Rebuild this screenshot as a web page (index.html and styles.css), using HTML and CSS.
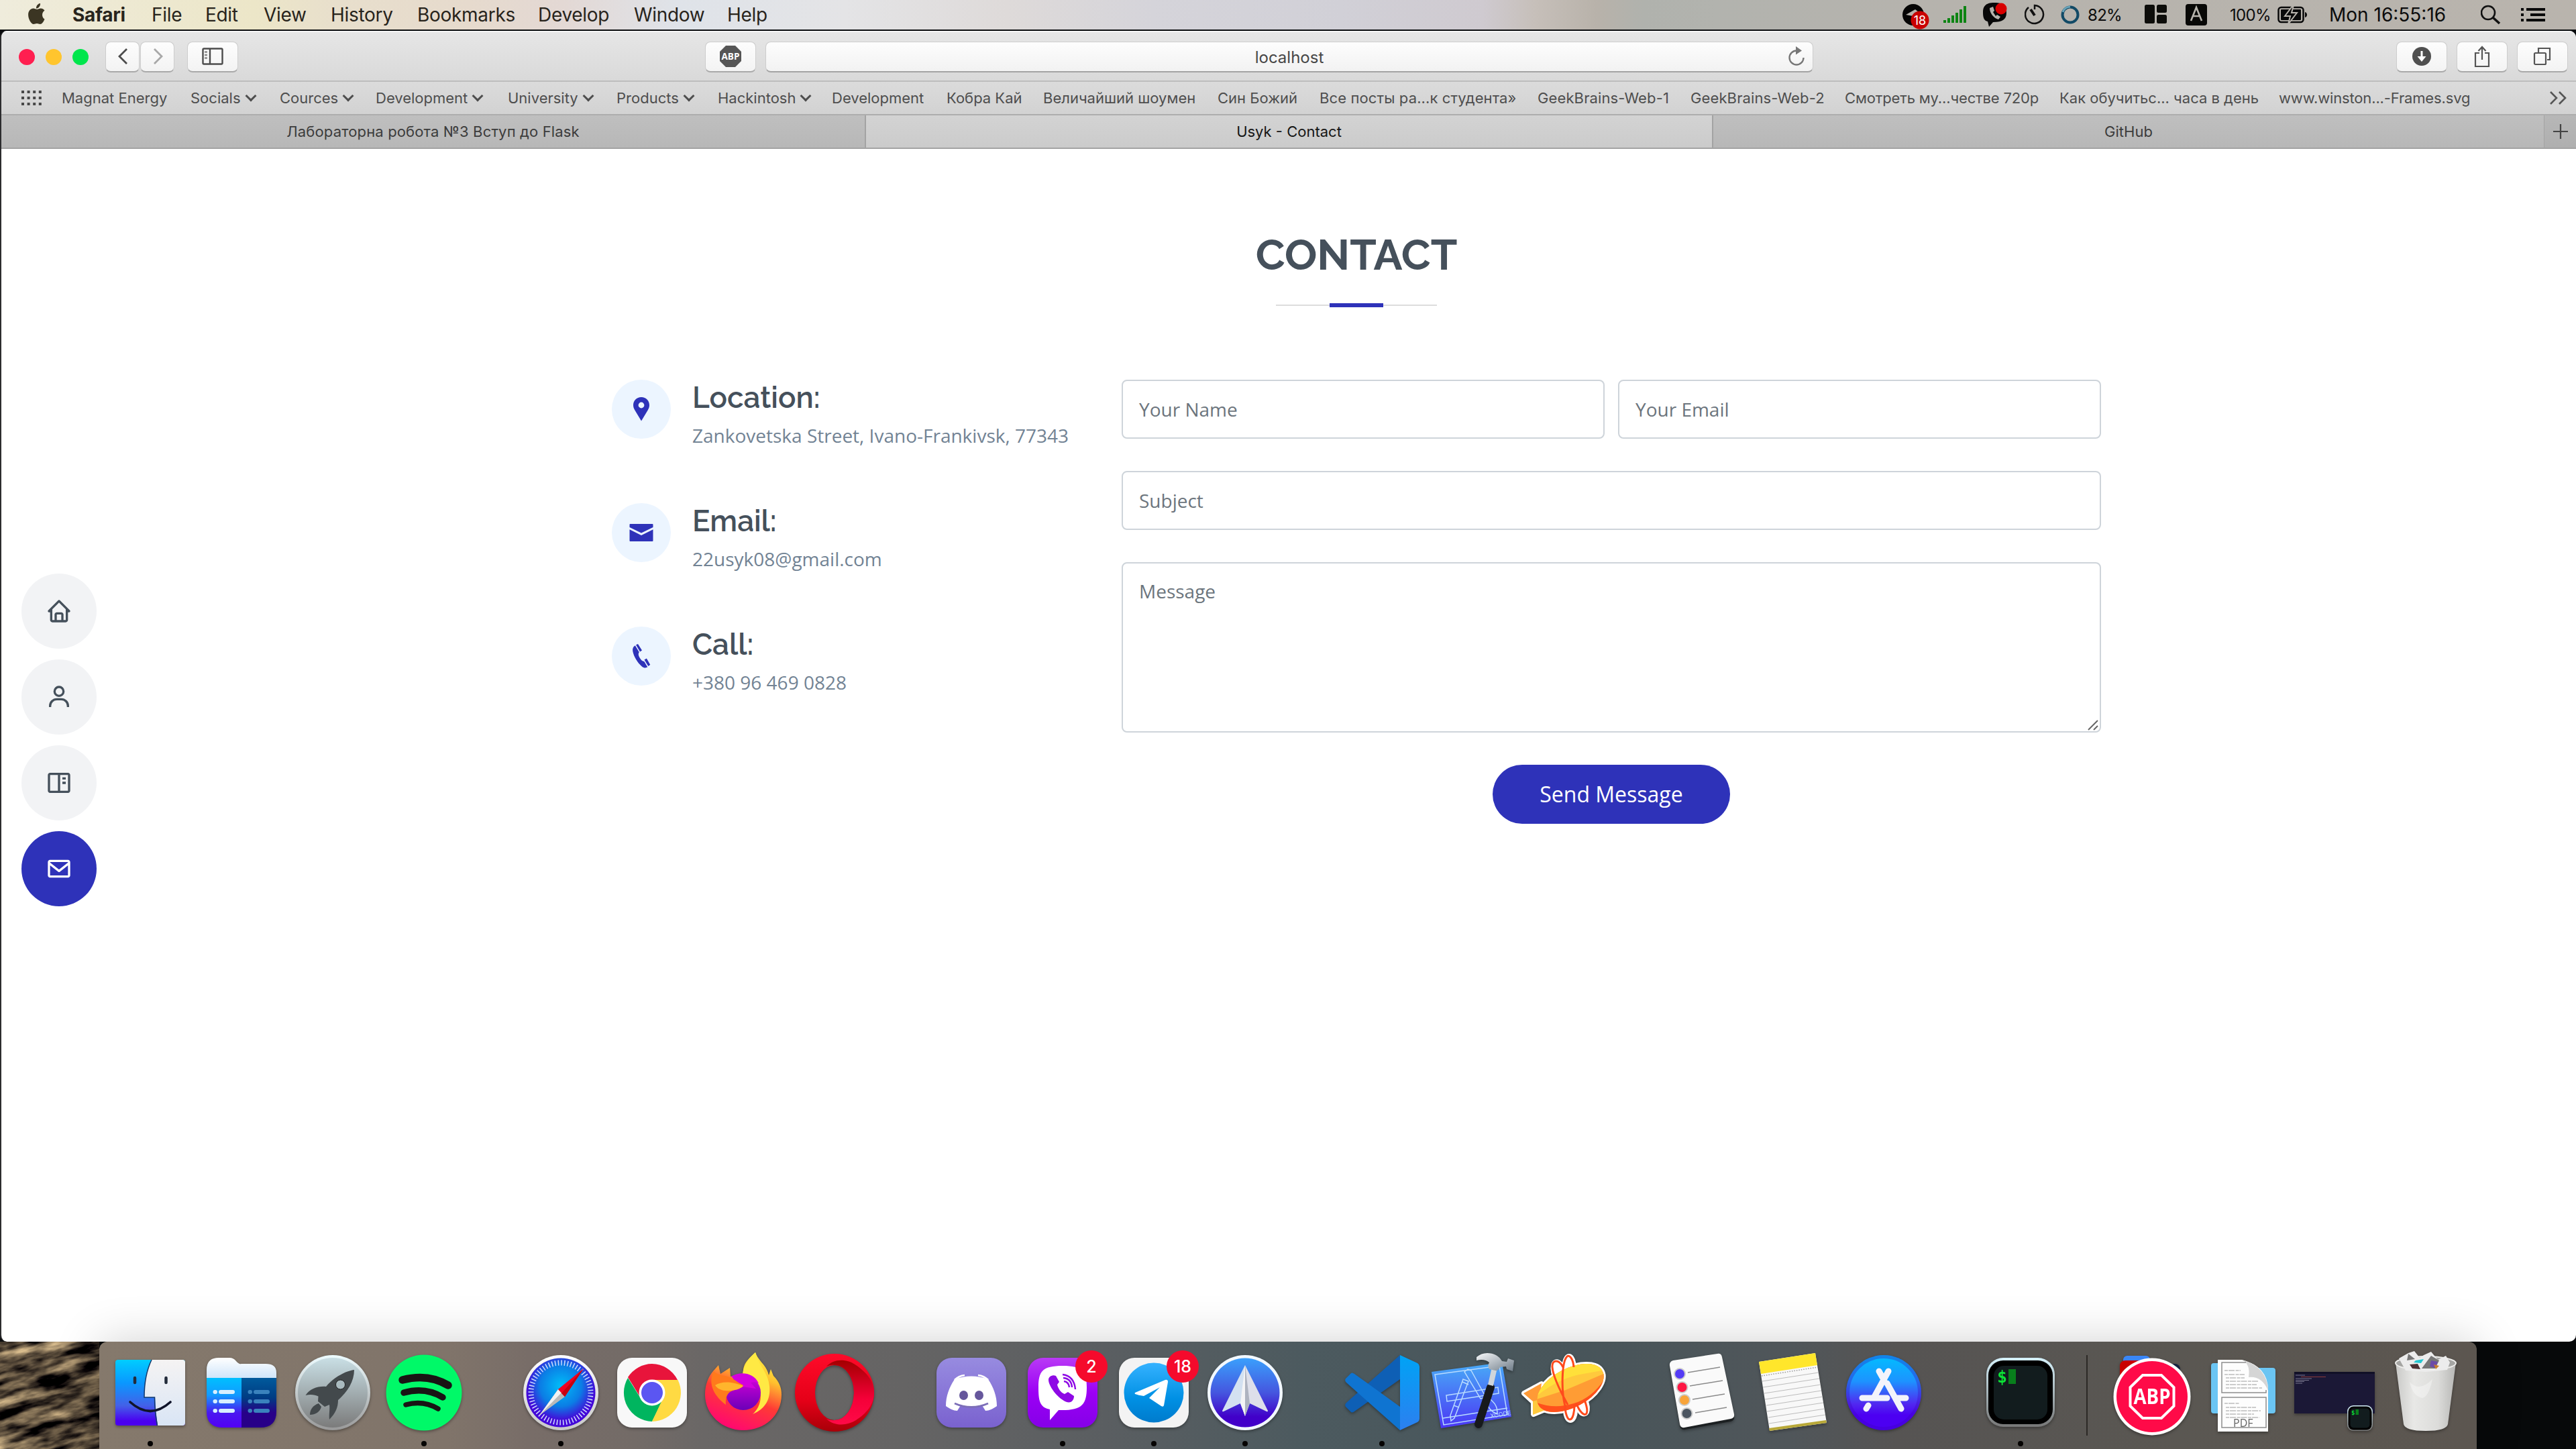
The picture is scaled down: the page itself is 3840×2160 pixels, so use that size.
FILE: index.html
```html
<!DOCTYPE html>
<html lang="en">
<head>
<meta charset="utf-8">
<title>Usyk - Contact</title>
<link rel="stylesheet" href="styles.css">
</head>
<body>
<div class="desktop">
  <header class="menubar">
    <svg class="apple" width="108" height="44" viewBox="0 0 108 44"><path d="M60 5c.6 3.600-2.600 7.600-6 7.600C53.600 9 56.600 5.400 60 5zM66.500 28.500c-1.700 4.300-4 7.500-6.600 7.500-1.700 0-2.900-1-4.900-1s-3.300 1-4.900 1c-3.600 0-8-7.400-8-14 0-5.800 3.700-9.400 7.600-9.400 2 0 3.700 1.300 5.300 1.300s3.400-1.400 5.800-1.400c2 0 4.300 1 5.700 3.200-5 3-4.200 10.600 0 12.800z" fill="#3b3523"/></svg>
    <nav class="menus">
      <b>Safari</b><span>File</span><span>Edit</span><span>View</span><span>History</span><span>Bookmarks</span><span>Develop</span><span>Window</span><span>Help</span>
    </nav>
    <div class="status">
      <svg width="44" height="44" viewBox="0 0 44 44"><circle cx="16" cy="22" r="16" fill="#050505"/><path d="M5 22l14-8 5 4-6 1-2 5z" fill="#b4b1ab"/><circle cx="26" cy="30" r="13.500" fill="#c90000"/><text x="26" y="36.500" class="tiny">18</text></svg>
      <svg width="44" height="44" viewBox="0 0 44 44" fill="#0d8413"><path d="M0 30h4v4H0zM6 27h4v7H6zM12 23h4v11h-4zM18 19h4v15h-4zM24 14h4v20h-4zM30 9h4v25h-4z"/></svg>
      <svg width="44" height="44" viewBox="0 0 44 44"><path d="M17 4C3 4 0 10 0 19c0 8 2 12 7 13l2 8 6-7c14 0 20-4 20-14S31 4 17 4z" fill="#080808"/><path d="M10 12c0 8 6 15 13 17l3-4-5-3-2 2-4-6 2-2-2-6z" fill="#b4b1ab"/><circle cx="27" cy="13" r="8.500" fill="#d80000"/></svg>
      <svg width="44" height="44" viewBox="0 0 44 44" fill="none" stroke="#111" stroke-width="2.500"><path d="M6 11A13.500 13.500 0 1 0 15 8v6"/><path d="M9 14l6 9" stroke-width="4"/></svg>
      <svg width="40" height="44" viewBox="0 0 40 44" fill="none"><circle cx="14" cy="22" r="11.500" stroke="#124a66" stroke-width="4"/><path d="M3 18A12 12 0 0 1 14 10" stroke="#69a3b8" stroke-width="3"/></svg>
      <span class="small">82%</span>
      <svg width="44" height="44" viewBox="0 0 44 44" fill="#0d0d0a"><rect y="7" width="15" height="28" rx="2.500"/><rect x="18" y="7" width="15" height="12" rx="2.500"/><rect x="18" y="22" width="15" height="13" rx="2.500"/></svg>
      <svg width="44" height="44" viewBox="0 0 44 44"><rect y="6" width="32" height="32" rx="4" fill="#080806"/><path d="M8 31l8-20 8 20M11 24h10" fill="none" stroke="#b6b3ac" stroke-width="2.600"/></svg>
      <span class="small">100%</span>
      <svg width="60" height="44" viewBox="0 0 60 44"><rect x="1.500" y="11" width="37" height="22" rx="4" fill="none" stroke="#0a0a0a" stroke-width="2.500"/><rect x="5" y="14" width="30" height="16" rx="1" fill="#0a0a0a"/><path d="M23 8L11 24h8l-3 12 13-17h-8l3-11z" fill="#0a0a0a" stroke="#b8b4ad" stroke-width="2"/><path d="M41 18v8c4-1 4-7 0-8z" fill="#0a0a0a"/></svg>
      <span>Mon 16:55:16</span>
      <svg width="44" height="44" viewBox="0 0 44 44" fill="none" stroke="#111" stroke-width="2.600"><circle cx="11" cy="19" r="10"/><path d="M18 26l10 9" stroke-width="3.600"/></svg>
      <svg width="44" height="44" viewBox="0 0 44 44" fill="#0a0a0a"><path d="M0 12h4v4H0zM8 12h28v4H8zM0 20h4v4H0zM14 20h22v4H14zM0 28h4v4H0zM8 28h28v4H8z"/></svg>
    </div>
  </header>

  <section class="window">
    <div class="toolbar">
      <div class="lights"><i class="red"></i><i class="yellow"></i><i class="green"></i></div>
      <div class="btn arrow"><svg width="48" height="44" viewBox="0 0 48 44"><path d="M30 11L19 22l11 11" fill="none" stroke="#4c4c4c" stroke-width="2.800"/></svg></div>
      <div class="btn arrow"><svg width="48" height="44" viewBox="0 0 48 44"><path d="M19 11l11 11-11 11" fill="none" stroke="#a8a8a8" stroke-width="2.800"/></svg></div>
      <div class="btn side"><svg width="32" height="26" viewBox="0 0 32 26" fill="none" stroke="#4c4c4c" stroke-width="2.400"><rect x="1.500" y="1.500" width="29" height="23" rx="1.500"/><path d="M12 2v22"/><path d="M4 6.500h4M4 11h4M4 15.500h4" stroke="#8a8a8a"/></svg></div>
      <div class="btn abp"><svg width="34" height="34" viewBox="0 0 34 34"><path d="M10 1h14l9 9v14l-9 9H10l-9-9V10z" fill="#555"/><text x="17" y="22" class="abp-sm" textLength="27" lengthAdjust="spacingAndGlyphs">ABP</text></svg></div>
      <div class="address"><span>localhost</span>
        <svg width="28" height="32" viewBox="0 0 28 32"><path d="M14 7.500A10.500 10.500 0 1 0 24.500 18" fill="none" stroke="#777" stroke-width="2.400"/><path d="M13 1l9 6.500-9 6z" fill="#777"/></svg></div>
      <div class="right-tools">
        <div class="btn"><svg width="30" height="30" viewBox="0 0 30 30"><circle cx="15" cy="15" r="14" fill="#4f4f4f"/><path d="M13.500 7h3v8h5L15 23l-6.500-8h5z" fill="#fff"/></svg></div>
        <div class="btn"><svg width="28" height="34" viewBox="0 0 28 34" fill="none" stroke="#555" stroke-width="2.200"><path d="M10 12H4v20h20V12h-6M14 22V3M8.500 9L14 3l5.500 6"/></svg></div>
        <div class="btn"><svg width="28" height="28" viewBox="0 0 28 28" fill="none" stroke="#555" stroke-width="2.200"><rect x="2" y="9" width="17" height="17" rx="1.500"/><path d="M8 8V2h17v17h-4"/></svg></div>
      </div>
    </div>
    <div class="bookmarks">
      <svg width="32" height="22" viewBox="0 0 32 22"><path d="M2 2h30M2 11h30M2 20h30" stroke="#484848" stroke-width="4" stroke-dasharray="4 4.600"/></svg>
      <span>Magnat Energy</span>
      <span class="more">Socials</span><span class="more">Cources</span><span class="more">Development</span><span class="more">University</span><span class="more">Products</span><span class="more">Hackintosh</span>
      <span>Development</span><span>Кобра Кай</span><span>Величайший шоумен</span><span>Син Божий</span><span class="loose">Все посты ра...к студента»</span><span class="loose">GeekBrains-Web-1</span><span class="loose">GeekBrains-Web-2</span><span class="tight">Смотреть му...честве 720p</span><span>Как обучитьс... часа в день</span><span class="tight">www.winston...-Frames.svg</span>
      <svg width="28" height="22" viewBox="0 0 28 22"><path d="M2 2l9 9-9 9M15 2l9 9-9 9" fill="none" stroke="#555" stroke-width="2.600"/></svg>
    </div>
    <div class="tabs">
      <div class="tab first">Лабораторна робота №3 Вступ до Flask</div>
      <div class="tab active">Usyk - Contact</div>
      <div class="tab">GitHub</div>
      <div class="tab plus"><svg width="24" height="24" viewBox="0 0 24 24"><path d="M12 1v22M1 12h22" stroke="#444" stroke-width="2.200"/></svg></div>
    </div>

    <div class="page">
      <aside class="sidenav">
        <a><svg viewBox="0 0 24 24"><path d="M3 13h1v7c0 1.103.897 2 2 2h12c1.103 0 2-.897 2-2v-7h1a1 1 0 0 0 .707-1.707l-9-9a.999.999 0 0 0-1.414 0l-9 9A1 1 0 0 0 3 13zm7 7v-5h4v5h-4zm2-15.586 6 6V15l.001 5H16v-5c0-1.103-.897-2-2-2h-4c-1.103 0-2 .897-2 2v5H6v-9.586l6-6z"/></svg></a>
        <a><svg viewBox="0 0 24 24"><path d="M12 2a5 5 0 1 0 5 5 5 5 0 0 0-5-5zm0 8a3 3 0 1 1 3-3 3 3 0 0 1-3 3zm9 11v-1a7 7 0 0 0-7-7h-4a7 7 0 0 0-7 7v1h2v-1a5 5 0 0 1 5-5h4a5 5 0 0 1 5 5v1z"/></svg></a>
        <a><svg viewBox="0 0 24 24"><path d="M20 3H4c-1.103 0-2 .897-2 2v14c0 1.103.897 2 2 2h16c1.103 0 2-.897 2-2V5c0-1.103-.897-2-2-2zM4 19V5h7v14H4zm9 0V5h7.001L20.002 19H13z"/><path d="M15 7h3v2h-3zm0 4h3v2h-3z"/></svg></a>
        <a class="current"><svg viewBox="0 0 24 24"><path d="M20 4H4c-1.103 0-2 .897-2 2v12c0 1.103.897 2 2 2h16c1.103 0 2-.897 2-2V6c0-1.103-.897-2-2-2zm0 2v.511l-8 6.223-8-6.222V6h16zM4 18V9.044l7.386 5.745a.994.994 0 0 0 1.228 0L20 9.044 20.002 18H4z"/></svg></a>
      </aside>
      <main class="contact">
        <h2>CONTACT</h2>
        <div class="rule"><i></i></div>
        <div class="columns">
          <div class="info">
            <div class="entry">
              <svg viewBox="0 0 88 88"><path d="M44 26c-7 0-12 5-12 12 0 3 1 5 2.200 7.200L44 61.500l9.800-16.300C55 43 56 41 56 38c0-7-5-12-12-12zm0 7.600a4.400 4.400 0 1 1 0 8.800 4.400 4.400 0 0 1 0-8.800z" fill-rule="evenodd"/></svg>
              <div><h4>Location:</h4><p>Zankovetska Street, Ivano-Frankivsk, 77343</p></div>
            </div>
            <div class="entry">
              <svg viewBox="0 0 88 88"><path d="M27.500 31h33q1 0 1 1v4L44 44.500 26.500 36v-4q0-1 1-1zM26.500 39.200L44 48l17.500-8.800V56q0 1-1 1h-33q-1 0-1-1z"/></svg>
              <div><h4>Email:</h4><p>22usyk08@gmail.com</p></div>
            </div>
            <div class="entry">
              <svg viewBox="0 0 88 88"><path d="M36 27.200l3-1.200 6 9.500-3 2zM34.800 28.200l6 10c-1.800 2-1 5 .8 8.300 2 3.400 4 5.500 6.700 5.500l5 8.600c-2.800 1.400-5.800 1-8.500-1.200-6-5-12-14.400-13.500-22.400-.8-4 .5-7.200 3.500-8.800zM48.500 49.500l3.400-2 5.400 9.500-3 2z"/></svg>
              <div><h4>Call:</h4><p>+380 96 469 0828</p></div>
            </div>
          </div>
          <form class="form">
            <label class="field">Your Name</label>
            <label class="field">Your Email</label>
            <label class="field wide">Subject</label>
            <label class="field wide area">Message<svg width="16" height="16" viewBox="0 0 16 16"><path d="M1 15L15 1M9 15l6-6" stroke="#666" stroke-width="2"/></svg></label>
            <div class="wide send"><a class="submit">Send Message</a></div>
          </form>
        </div>
      </main>
    </div>
  </section>

  <footer class="tray">
    <svg class="rock" width="148" height="160"><filter id="rk" x="0" y="0" width="100%" height="100%" color-interpolation-filters="sRGB"><feTurbulence type="fractalNoise" baseFrequency="0.016 0.06" numOctaves="4" seed="8"/><feColorMatrix values="1.700 0 0 0 -.53  1.500 0 0 0 -.48  1.100 0 0 0 -.34  0 0 0 0 1"/></filter><rect x="-60" y="-60" width="300" height="300" filter="url(#rk)" transform="rotate(-14 74 80)"/></svg>
    <div class="dock">
      <div class="app on"><svg viewBox="0 0 136 160"><defs><linearGradient id="f1" x2="0" y2="1"><stop stop-color="#00cdff"/><stop offset=".35" stop-color="#0a98ff"/><stop offset=".7" stop-color="#4360e8"/><stop offset=".93" stop-color="#4a00f0"/></linearGradient><linearGradient id="f2" x2="0" y2="1"><stop stop-color="#f5f3f3"/><stop offset="1" stop-color="#d9e5f5"/></linearGradient></defs><rect x="16" y="27" width="104" height="98" rx="4" fill="url(#f1)"/><path d="M70 27h46q4 0 4 4v90q0 4-4 4H79q-3-20-4-42H59Q59 50 70 27z" fill="url(#f2)"/><path d="M70 27Q59 50 59 83h15.500q0 22 4 42" fill="none" stroke="#12386b" stroke-width="1.500"/><path d="M45 54v7M91.500 54v7" stroke="#222b3a" stroke-width="4.500" stroke-linecap="round"/><path d="M38 90q30 27 60 0" fill="none" stroke="#10142a" stroke-width="3.600" stroke-linecap="round"/></svg></div>

      <div class="app"><svg viewBox="0 0 136 160"><defs><linearGradient id="c1" x2="0" y2="1"><stop stop-color="#00c0ff"/><stop offset=".35" stop-color="#129aff"/><stop offset=".7" stop-color="#4a18f0"/><stop offset="1" stop-color="#5200f5"/></linearGradient><linearGradient id="c2" x2="0" y2="1"><stop stop-color="#005a9c"/><stop offset=".4" stop-color="#003c83"/><stop offset=".7" stop-color="#270088"/></linearGradient><linearGradient id="c3" x2="0" y2="1"><stop stop-color="#fff"/><stop offset="1" stop-color="#cfe5fa"/></linearGradient></defs><path d="M16 54V42q0-18 18-18h16q6 0 10 5t8 4h36q16 0 16 13v8z" fill="url(#c3)"/><path d="M16 54h52v74H40q-24 0-24-24z" fill="url(#c1)"/><path d="M68 54h52v50q0 24-24 24H68z" fill="url(#c2)"/><g stroke-width="6" stroke-linecap="round"><path d="M28.500 75h.5M37 75h18M28.500 89h.5M37 89h18M28.500 103h.5M37 103h18" stroke="#d8efff"/><path d="M80.500 75h.5M89 75h18M80.500 89h.5M89 89h18M80.500 103h.5M89 103h18" stroke="#3a82bd"/></g></svg></div>

      <div class="app"><svg viewBox="0 0 136 160"><defs><linearGradient id="l1" x2="0" y2="1"><stop stop-color="#c9dfe5"/><stop offset="1" stop-color="#7b7b7b"/></linearGradient><linearGradient id="l2" x2="0" y2="1"><stop stop-color="#eefcff"/><stop offset="1" stop-color="#999"/></linearGradient></defs><circle cx="68" cy="76" r="56" fill="url(#l2)"/><circle cx="68" cy="76" r="52" fill="url(#l1)"/><path d="M100 42C86 44 68 54 58 67c-12-1-24 3-30.500 13 7-2 14-1 19 1.500L46 89l10 8 7-3c1 8-1 14 0 22 9-9 13-18 13-29 14-12 24-28 24-45zM47 92c-9 3-13 10-13 17 8 0 15-4 17-12z" fill="#43494c"/><circle cx="79.500" cy="64" r="7" fill="#a9babf" stroke="#222" stroke-width="1"/></svg></div>

      <div class="app on"><svg viewBox="0 0 136 160"><circle cx="68" cy="76" r="56.500" fill="#00f968"/><g fill="none" stroke="#191414" stroke-linecap="round"><path d="M36 57q38-10 68 8" stroke-width="11.500"/><path d="M38 76q32-9 58 7" stroke-width="9.500"/><path d="M41 94q26-7 48 6" stroke-width="7.500"/></g></svg></div>

      <i class="gap"></i>

      <div class="app on"><svg viewBox="0 0 136 160"><defs><radialGradient id="s1" cx=".5" cy=".4"><stop stop-color="#00bdf8"/><stop offset=".6" stop-color="#0b7de5"/><stop offset="1" stop-color="#4409d8"/></radialGradient><linearGradient id="s2" x2="0" y2="1"><stop stop-color="#fff"/><stop offset="1" stop-color="#c8c8c8"/></linearGradient></defs><circle cx="68" cy="76" r="56" fill="url(#s2)"/><circle cx="68" cy="76" r="51.500" fill="url(#s1)"/><circle cx="68" cy="76" r="44.500" fill="none" stroke="#cfdcff" stroke-width="8" stroke-dasharray="1.500 3.160"/><path d="M36 110l28-39 10 11z" fill="#b9b9b9"/><path d="M36 110l28-39 5 5z" fill="#f2f2f2"/><path d="M102 40L64 71l10 11z" fill="#f00020"/><path d="M102 40L69 77l5 5z" fill="#c6000e"/></svg></div>

      <div class="app"><svg viewBox="0 0 136 160"><rect x="16" y="24" width="104" height="104" rx="22" fill="#f8f8f8"/><path d="M68 33a43 43 0 0 0-36 20l21 34 16-30h37A43 43 0 0 0 68 33z" fill="#e8143b"/><path d="M32 54a43 43 0 0 0 36 65l15-30-15 6-16-9z" fill="#00b55f"/><path d="M68 57h38.500A43 43 0 0 1 68 119l16-34z" fill="#ffda43"/><circle cx="68" cy="76" r="19.500" fill="#fff"/><circle cx="68" cy="76" r="16" fill="#5b56f2"/></svg></div>

      <div class="app"><svg viewBox="0 0 136 160"><defs><linearGradient id="x1" x1=".8" y1="0" x2=".4" y2="1"><stop stop-color="#fff94a"/><stop offset=".3" stop-color="#ffc02e"/><stop offset=".6" stop-color="#ff3a35"/><stop offset="1" stop-color="#ff0870"/></linearGradient><linearGradient id="x2" x2="0" y2="1"><stop stop-color="#d900d8"/><stop offset="1" stop-color="#6a00b8"/></linearGradient></defs><path d="M86 16c5 14 17 19 20 34l3-9 4 10c8 8 12 17 12 28 0 31-25 53-57 53S11 108 11 79c0-15 5-27 12-35l8-9 3 13 14-9 1 13 19-5c-1-13 6-20 18-31z" fill="url(#x1)"/><path d="M86 16c-12 11-18 20-19 33 17 2 27 15 27 32 0 12-6 22-12 27 20-8 27-24 25-42-2-20-16-30-21-50z" fill="#ffe944"/><circle cx="68" cy="76" r="26" fill="url(#x2)"/><path d="M50 52c12-8 33-7 41 10-4-2-8-2-12-1l8 9-20-3z" fill="#d300de"/><path d="M24 44c5 6 15 6 21 8 8 2 13 8 23 13-1 5-8 4-13 7-7 2-14 6-13 22-16-12-28-30-18-50z" fill="#ff7a1c"/><path d="M26 65c9-5 21-7 42 1-5 5-14 7-20 7-10 1-18-2-22-8z" fill="#ffb52c"/></svg></div>

      <div class="app"><svg viewBox="0 0 136 160"><defs><linearGradient id="o1" x2="0" y2="1"><stop stop-color="#ff0b2a"/><stop offset=".6" stop-color="#e50018"/><stop offset="1" stop-color="#a80008"/></linearGradient><linearGradient id="o2" x2="0" y2="1"><stop stop-color="#a30000"/><stop offset=".6" stop-color="#f50038"/><stop offset="1" stop-color="#ff0a48"/></linearGradient></defs><path d="M68 18a59 58 0 1 0 0 116 59 58 0 1 0 0-116zm0 17a29 41 0 1 1 0 82 29 41 0 1 1 0-82z" fill="url(#o1)" fill-rule="evenodd"/><path d="M56 37c11-12 30-12 44-2 16 11 27 24 27 41s-11 31-27 41c-14 9-33 9-44-2a29 41 0 0 0 12 2 29 41 0 0 0 0-82 29 41 0 0 0-12 2z" fill="url(#o2)"/></svg></div>

      <i class="gap"></i>

      <div class="app"><svg viewBox="0 0 136 160"><defs><linearGradient id="d1" x2="0" y2="1"><stop stop-color="#978be0"/><stop offset="1" stop-color="#7a62cf"/></linearGradient></defs><rect x="16" y="24" width="104" height="104" rx="23" fill="url(#d1)"/><path d="M43 56q25-9 50 0c8 12 13 25 13 40-6 4-11 7-17 7l-5-8q-16 4-32 0l-5 8c-6 0-11-3-17-7 0-15 5-28 13-40z" fill="#fff"/><path d="M43 57q6-6 15-7M93 57q-6-6-15-7" fill="none" stroke="#fff" stroke-width="2.500"/><path d="M43 92q25 11 50 0" fill="none" stroke="#7d6fb8" stroke-width="3"/><ellipse cx="56.500" cy="80" rx="6.500" ry="7" fill="#66579c"/><ellipse cx="79.500" cy="80" rx="6.500" ry="7" fill="#66579c"/></svg></div>

      <div class="app on"><svg viewBox="0 0 136 160"><defs><linearGradient id="v1" x2="0" y2="1"><stop stop-color="#b93af5"/><stop offset=".5" stop-color="#9c00f5"/><stop offset="1" stop-color="#8500e8"/></linearGradient></defs><rect x="16" y="24" width="104" height="104" rx="23" fill="url(#v1)"/><path d="M68 36c-30 0-36 8-36 32 0 20 2 30 17 33v16l13-15c34 1 42-7 42-34 0-24-6-32-36-32z" fill="#fff"/><path d="M47 56c-1 12 22 38 33 34 4-2 5-6 5-9l-9-6-5 3c-6-2-10-9-11-14l3-4-5-9c-4-2-10 0-11 5z" fill="#8e09e5"/><path d="M70 59q7 1 8 9M69 54q12 1 13 14M68 49q17 2 19 22" fill="none" stroke="#8e09e5" stroke-width="2.400"/></svg><b class="badge">2</b></div>

      <div class="app on"><svg viewBox="0 0 136 160"><defs><linearGradient id="t1" x2="0" y2="1"><stop stop-color="#35b2ff"/><stop offset=".6" stop-color="#0090e4"/><stop offset="1" stop-color="#007bcc"/></linearGradient></defs><rect x="16" y="24" width="104" height="104" rx="23" fill="#f3f3f3"/><circle cx="68" cy="76" r="44.500" fill="url(#t1)"/><path d="M40 76l45-19q4-1 4 3l-6 35q-1 3-4 1L61 84l16-16-24 13q-8-1-13-3-1-1 0-2z" fill="#fff"/></svg><b class="badge">18</b></div>

      <div class="app on"><svg viewBox="0 0 136 160"><defs><linearGradient id="k1" x2="0" y2="1"><stop stop-color="#3aa0fc"/><stop offset=".5" stop-color="#4556df"/><stop offset=".85" stop-color="#4100c9"/></linearGradient></defs><circle cx="68" cy="76" r="56" fill="#f2f8ff"/><circle cx="68" cy="76" r="51.500" fill="url(#k1)"/><path d="M68 35l-34 68q0 2 2 1l25-12 7 19z" fill="#d3e1f1"/><path d="M68 35l34 68q0 2-2 1L75 92l-7 19z" fill="#dddfea"/><path d="M68 35l-7 57 7 19z" fill="#f4f4f6"/><path d="M68 35l7 57-7 19z" fill="#aeb3c0"/></svg></div>

      <i class="gap"></i>

      <div class="app on"><svg viewBox="0 0 136 160"><defs><linearGradient id="vs" x2="0" y2="1"><stop stop-color="#00a3f5"/><stop offset="1" stop-color="#2c7ff0"/></linearGradient></defs><path d="M95 20v36L27 104q-4 3-6 0l-7-7q-2-3 1-6z" fill="#0e5fb5"/><path d="M27 48q-4-3-6 0l-7 7q-2 3 1 6l80 71v-35z" fill="#0f74d1"/><path d="M95 20l26 12q3 2 3 5v78q0 3-3 5l-26 12z" fill="url(#vs)"/></svg></div>

      <div class="app"><svg viewBox="0 0 136 160"><defs><linearGradient id="xc" x2="0" y2="1"><stop stop-color="#48acf7"/><stop offset="1" stop-color="#4b36f5"/></linearGradient><linearGradient id="xh" x2="1" y2="1"><stop stop-color="#f6f8fa"/><stop offset="1" stop-color="#6f7c88"/></linearGradient></defs><path d="M6 45l105-14 14 81-105 17z" fill="url(#xc)"/><g fill="none" stroke="#b9dcff" stroke-width="1.500"><path d="M11 49l96-13 12 73-95 15zM23 114l96-15M28 80l77-12 1 9-77 12zM53 56l8 3-21 55-5 4-1-8zM55 45l5-4 5 2 22 40-8 2zM88 90q3-8 8-2 9 8 8 20-13-5-16-18"/><path d="M47 98l-8-3M61 64l-9-4"/></g><text x="94" y="114" class="xc" transform="rotate(-9 94 114)">XCODE</text><path d="M94 68l-18 55" stroke="#17191c" stroke-width="12" stroke-linecap="round"/><path d="M94 65l7-31" stroke="#cfd5da" stroke-width="8"/><path d="M73 23q7-6 16-6 15 0 22 12l7 1 2-5 9 3-2 16-9-3-1-4-9 1q-2 6-7 5l-9-2q-3-5 0-10-7-6-19-3z" fill="url(#xh)"/></svg></div>

      <div class="app"><svg viewBox="0 0 136 160"><defs><clipPath id="zb"><ellipse cx="77" cy="69" rx="54" ry="29" transform="rotate(-28 77 69)"/></clipPath></defs><g fill="#fff" stroke="#fff" stroke-width="8" stroke-linejoin="round"><ellipse cx="59" cy="44" rx="7" ry="14" transform="rotate(-14 59 44)"/><ellipse cx="75" cy="40" rx="7" ry="18"/><ellipse cx="77" cy="102" rx="7" ry="15"/><ellipse cx="94" cy="94" rx="7" ry="14" transform="rotate(-18 94 94)"/><path d="M8 77l26-14 24 30-36 15v-18z"/><ellipse cx="77" cy="69" rx="53" ry="28" transform="rotate(-28 77 69)"/></g><path d="M7 77l27-15-4 28-9-1z" fill="#ff9a36"/><path d="M21 89l14-4 12 14-26 10z" fill="#ffc93d"/><g clip-path="url(#zb)"><path d="M0 0h136v140H0z" fill="#ff501c"/><path d="M0 0h136v53Q100 92 58 96q-20 2-58-4z" fill="#ff9c34"/><path d="M0 0h136v46L70 80 20 100 0 90z" fill="#ffc93d"/><path d="M0 0h130v42L96 48Q60 54 28 80L0 90z" fill="#ffe03a"/><path d="M136 44L70 72l-50 16 10 20 80-10 26-20z" fill="#ff9c34"/><path d="M20 88q30 14 62 4 30-9 50-43v70H20z" fill="#ff501c"/></g><g stroke="#ff4a1c" stroke-width="3" fill="none"><path d="M66 38C60 26 49 26 50 38c1 14 12 36 23 56M82 38c-1-12-6-19-10-16-8 8-9 50-3 74M69 94c0 14 4 22 7 22 5 0 7-12 7-22M86 92c4 12 12 20 15 15 2-4 0-12-3-20"/></g></svg></div>

      <i class="gap"></i>

      <div class="app"><svg viewBox="0 0 136 160"><path d="M22 40l14 85q1 7 8 6l68-12q6-2 5-8z" fill="#1c2022"/><path d="M26 28l66-10q6-1 7 5l18 85q1 6-5 7l-69 13q-6 1-7-5L21 36q-1-6 5-8z" fill="#fafafa"/><g stroke="#ccc" stroke-width="2"><circle cx="36" cy="48" r="8" fill="#553cf5"/><circle cx="39.500" cy="68" r="8" fill="#ff1744"/><circle cx="43" cy="87" r="8" fill="#f8a43a"/><circle cx="46.500" cy="107" r="8" fill="#4b5560"/></g><path d="M48 46l48-8M51 66l49-8M55 86l48-8M59 106l47-8" stroke="#8a8a8a" stroke-width="1.500"/></svg></div>

      <div class="app"><svg viewBox="0 0 136 160"><path d="M18 30l84-13 17 104-85 12z" fill="#f8f8f8"/><path d="M18 30l84-13 3 18-84 13z" fill="#ffe62b"/><path d="M22 51l84-13" stroke="#999" stroke-width="1.500" stroke-dasharray="1.500 2"/><path d="M23 59l84-13M24 68l84-13M26 77l84-13M27 86l84-13M29 95l84-13M30 104l84-13M32 113l84-13M33 122l84-13" stroke="#bdbdbd" stroke-width="1.200"/><path d="M34 133l85-12-1-4-85 12z" fill="#b8a838"/></svg></div>

      <div class="app"><svg viewBox="0 0 136 160"><defs><linearGradient id="a1" x2="0" y2="1"><stop stop-color="#00bfff"/><stop offset=".35" stop-color="#1d93ff"/><stop offset=".65" stop-color="#5128f0"/><stop offset=".8" stop-color="#4c00f2"/></linearGradient></defs><circle cx="68" cy="76" r="56" fill="url(#a1)"/><circle cx="68" cy="76" r="53.500" fill="none" stroke="#3b00b5" stroke-opacity=".3" stroke-width="5"/><g stroke="#f3f4fb" stroke-width="9" stroke-linecap="round" fill="none"><path d="M75 44L53 84M61 44l5 9M73 62l21 38M36 84h37M86 84h15M45 95l-3 5"/></g></svg></div>

      <i class="gap"></i>

      <div class="app on"><svg viewBox="0 0 136 160"><defs><linearGradient id="tm" x2="0" y2="1"><stop stop-color="#d5f1fb"/><stop offset="1" stop-color="#777"/></linearGradient></defs><rect x="17" y="24" width="102" height="103" rx="25" fill="url(#tm)"/><rect x="20" y="28" width="96" height="95" rx="22" fill="#000"/><rect x="28" y="36" width="80" height="80" rx="15" fill="#121c1e"/><text x="33" y="61" class="prompt">$</text><rect x="50" y="41" width="11" height="22" fill="#087f1c"/></svg></div>

      <i class="sep"></i>

      <div class="app"><svg viewBox="0 0 136 160"><rect x="25" y="21" width="40" height="40" rx="6" fill="#3a86f7"/><rect x="20" y="28" width="70" height="40" rx="8" fill="#c90000"/><rect x="70" y="33" width="40" height="40" rx="8" fill="#14213f"/><circle cx="68" cy="82" r="57.500" fill="#fff"/><circle cx="68" cy="82" r="53" fill="#ff0a48"/><path d="M54 50h28l18.500 18v28L82 114H54L35.500 96V68z" fill="none" stroke="#fff" stroke-width="4"/><text x="68" y="93" class="abp-lg" textLength="55" lengthAdjust="spacingAndGlyphs">ABP</text></svg></div>

      <div class="app"><svg viewBox="0 0 136 160"><path d="M20 36q0-4 4-4h34l6 7h48q4 0 4 4v60q0 4-4 4H24q-4 0-4-4z" fill="#6bc5f3"/><path d="M30 27h36q39 10 39 45v62H30z" fill="#fdfdfd"/><path d="M66 27q13 6 10 26 20-2 29 20Q104 38 66 27z" fill="#d5d5d5"/><g fill="none" stroke="#8d8d8d" stroke-width="1.500"><path d="M72 31H36v45h66v-4M36 83h66v45H36z"/><path d="M40 43h24M40 49h30M42 54h28M42 59h48M42 64h46M42 69h54M40 92h22M42 98h45M42 103h52M42 108h42M42 113h50" stroke="#bcbcbc" stroke-dasharray="5 1 9 1.500"/></g><text x="53" y="127" class="pdf">PDF</text></svg></div>

      <div class="app"><svg viewBox="0 0 136 160"><rect x="8" y="45" width="120" height="62" fill="#1b1836"/><rect x="8" y="45" width="120" height="3" fill="#111026"/><path d="M10 50h14M10 55h24M10 57.500h20M10 59.500h13M10 62h10" stroke="#77758c" stroke-width="1"/><path d="M18 52.500h37" stroke="#8a3a3a" stroke-width="1"/><rect x="87" y="95" width="38" height="38" rx="9" fill="url(#tm)"/><rect x="88.500" y="96.500" width="35" height="35" rx="8" fill="#000"/><rect x="91.500" y="99.500" width="29" height="29" rx="5" fill="#121c1e"/><text x="93" y="108.500" class="prompt-sm">$</text><rect x="99.500" y="101" width="4.500" height="8" fill="#087f1c"/></svg></div>

      <div class="app"><svg viewBox="0 0 136 160"><defs><linearGradient id="tr" x2="1"><stop stop-color="#c9c9c7"/><stop offset=".3" stop-color="#e8e8e6"/><stop offset=".7" stop-color="#dcdcda"/><stop offset="1" stop-color="#b7b7b5"/></linearGradient></defs><path d="M23 31l12 92q2 10 33 10t33-10l12-92z" fill="url(#tr)"/><ellipse cx="68" cy="32" rx="45" ry="10" fill="#a5a5a3" stroke="#ededeb" stroke-width="2"/><path d="M28 25l14-8 9-3 8 10 6-4 11-5 10 12 12-6 6 10-4 11-32 3-30-2z" fill="#ececec"/><path d="M42 18l10 8-12 2zM62 40l14-19 12 7-6 12z" fill="#777"/><path d="M53 28l12-2-4 6-11-1z" fill="#26c6d0"/><path d="M76 28l10 2-4 9-8-2z" fill="#6b4aa8"/><path d="M80 34l8 2-5 5z" fill="#c77a2c"/><path d="M44 34l12-1 4 8-12-1z" fill="#4d3134"/><path d="M44 60q14 16 34-4-6 28-16 28-14-4-18-24z" fill="#fff" opacity=".35"/></svg></div>
    </div>
  </footer>
</div>
</body>
</html>
```
FILE: styles.css
```css
* { box-sizing: border-box; }

body {
  margin: 0;
  font-family: Inter, "Noto Sans", sans-serif;
}

.desktop {
  width: 3840px;
  height: 2160px;
  overflow: hidden;
  display: flex;
  flex-direction: column;
  background: #0a0c0e;
}

/* menu bar */
.menubar {
  height: 44px;
  flex: none;
  display: flex;
  margin-bottom: 2px;
  font-size: 28px;
  line-height: 45px;
  color: #0c0c0c;
  white-space: nowrap;
  background: linear-gradient(90deg, #efecdc 0, #ece6c8 380px, #e8dfcc 500px, #e6dacd 700px, #e3d8d4 840px, #dfe3e9 1010px, #e4e4e6 1260px, #dedad9 1500px, #d5d4da 1720px, #d1d0d7 2000px, #cfcad0 2210px, #c6bfb9 2290px, #b8b2aa 2380px, #b0b2ad 2450px, #b2b3ae 2560px, #b6b3ad 2900px, #b9b4ad 3840px);
}

.apple { flex: none; }

.menus {
  display: grid;
  grid-template-columns: 118px 80px 87px 100px 129px 180px 143px 139px 120px;
  letter-spacing: -0.3px;
  color: #28241c;
}

.status {
  margin-left: auto;
  display: grid;
  grid-template-columns: 61px 59px 62px 54px 40px 85px 61px 66px 71px 77px 226px 60px 82px;
}

.status svg { display: block; }
.status .small { font-size: 24px; letter-spacing: -0.7px; }
.tiny { font-size: 18px; fill: #fff; text-anchor: middle; }

/* browser window */
.window {
  height: 1954px;
  flex: none;
  display: flex;
  flex-direction: column;
  border-left: 2px solid #2c2c2e;
  border-radius: 10px;
  background: #fff;
  overflow: hidden;
}

.toolbar {
  height: 76px;
  flex: none;
  display: flex;
  align-items: center;
  padding: 1px 12px 0 26px;
  border-top: 2px solid #f6f6f6;
  border-bottom: 2px solid #bdbdbd;
  background: linear-gradient(#e6e6e6, #d9d9d9);
}

.lights { display: flex; gap: 16px; width: 129px; }
.lights i { width: 24px; height: 24px; border-radius: 50%; }
.lights .red { background: #ff1f50; }
.lights .yellow { background: #ffc52e; }
.lights .green { background: #00e64c; }

.btn {
  width: 76px;
  height: 46px;
  display: flex;
  align-items: center;
  justify-content: center;
  border: 1px solid #cdcdcd;
  border-bottom: 2px solid #a9a9a9;
  border-radius: 8px;
  background: linear-gradient(#fdfdfd, #f3f3f3);
}

.arrow { width: 51px; margin-right: 1px; }
.side { margin-left: 18px; }
.abp { margin-left: 696px; }

.abp-sm { font: 700 15px "Open Sans", sans-serif; fill: #fff; text-anchor: middle; }

.address {
  width: 1562px;
  height: 46px;
  margin-left: 14px;
  display: flex;
  align-items: center;
  border: 1px solid #cdcdcd;
  border-bottom: 2px solid #a3a3a3;
  border-radius: 8px;
  background: linear-gradient(#fdfdfd, #f2f2f2);
  font-size: 24px;
  color: #474747;
}

.address span { flex: 1; text-align: center; padding: 2px 0 0 38px; }
.address svg { margin-right: 10px; }

.right-tools { margin-left: auto; display: flex; gap: 14px; }

.bookmarks {
  height: 50px;
  flex: none;
  display: grid;
  grid-template-columns: 62px 192px 133px 143px 197px 162px 151px 170px 171px 144px 260px 152px 325px 228px 230px 320px 327px 403px 40px;
  align-items: center;
  padding-left: 28px;
  font-size: 22px;
  color: #4e4e4e;
  white-space: nowrap;
  background: linear-gradient(#dbdbdb, #d2d2d2);
  border-bottom: 2px solid #adadad;
}

.tight { letter-spacing: -0.15px; }
.loose { letter-spacing: 0.12px; }

.more::after {
  content: "";
  display: inline-block;
  width: 9px;
  height: 9px;
  margin: 0 0 5px 9px;
  border: solid #4e4e4e;
  border-width: 0 3px 3px 0;
  transform: rotate(45deg);
}

.tabs {
  height: 50px;
  flex: none;
  display: grid;
  grid-template-columns: 1287px 1265px 1238px 48px;
  font-size: 22px;
  border-bottom: 2px solid #a3a3a3;
  background: linear-gradient(#bfbfbf, #b7b7b7);
  color: #3c3c3c;
}

.tab { display: flex; align-items: center; justify-content: center; }
.tab.first { letter-spacing: 0.15px; }

.tab.active {
  color: #161616;
  background: linear-gradient(#d3d3d3, #cbcbcb);
  border: solid #a3a3a3;
  border-width: 0 2px;
}

.tab.plus { border-left: 1px solid #a3a3a3; background: rgba(0, 0, 0, .04); }

/* contact page */
.page { flex: 1; display: flex; }

.sidenav {
  width: 202px;
  padding: 633px 0 0 30px;
  display: flex;
  flex-direction: column;
  gap: 16px;
}

.sidenav a {
  width: 112px;
  height: 112px;
  border-radius: 50%;
  display: flex;
  align-items: center;
  justify-content: center;
  background: #f2f3f5;
}

.sidenav svg { width: 40px; height: 40px; fill: #45505b; }
.sidenav .current { background: #2e32b9; }
.sidenav .current svg { fill: #fff; }

.contact {
  flex: 1;
  display: flex;
  flex-direction: column;
  align-items: center;
  font-family: "Open Sans", sans-serif;
}

.contact h2 {
  margin: 119px 0 0;
  font: 700 64px/77px Raleway, Lato, sans-serif;
  color: #45505b;
}

.rule {
  width: 240px;
  height: 2px;
  margin-top: 36px;
  display: flex;
  justify-content: center;
  align-items: center;
  background: #ddd;
}

.rule i { flex: none; width: 80px; height: 6px; background: #2e32b9; }

.columns {
  width: 2220px;
  margin-top: 110px;
  display: grid;
  grid-template-columns: 760px 1460px;
}

.entry { display: flex; height: 184px; gap: 32px; }

.entry > svg {
  width: 88px;
  height: 88px;
  border-radius: 50%;
  background: #ecf5ff;
  fill: #2e32b9;
}

.entry h4 {
  margin: 0 0 9px;
  font: 600 44px/53px Raleway, Lato, sans-serif;
  color: #45505b;
}

.entry p { margin: 0; font-size: 28px; line-height: 42px; color: #728394; white-space: nowrap; }

.form { display: grid; grid-template-columns: 720px 720px; gap: 48px 20px; }
.wide { grid-column: 1 / 3; }

.field {
  height: 88px;
  padding: 0 24px;
  display: flex;
  justify-content: space-between;
  line-height: 84px;
  border: 2px solid #ced4da;
  border-radius: 8px;
  font-size: 28px;
  color: #6c757d;
}

.area { height: 254px; padding-right: 2px; line-height: 82px; }
.area svg { align-self: flex-end; margin-bottom: 1px; }

.send { display: flex; justify-content: center; }

.submit {
  width: 354px;
  height: 88px;
  border-radius: 44px;
  background: #2e32b9;
  color: #fff;
  font-size: 32px;
  line-height: 88px;
  text-align: center;
}

/* dock */
.tray { height: 160px; display: flex; background: #07090a; }
.rock { flex: none; }

.dock {
  width: 3544px;
  display: flex;
  padding-left: 8px;
  border-radius: 12px 12px 0 0;
  z-index: 1;
  background: linear-gradient(90deg, #85796c, #80746a 520px, #786d68 640px, #736b67 800px, #6a6766 900px, #656464 1200px, #5a5e61 1500px, #4c5a5f 1800px, #48555a 2200px, #50565a 2520px, #565453 2680px, #5a5752 3100px, #5c5650 3544px);
  box-shadow: 0 0 70px rgba(0, 0, 0, .19);
}

.app { width: 136px; height: 160px; flex: none; position: relative; }
.app svg { display: block; width: 136px; height: 160px; filter: drop-shadow(0 2px 2px rgba(0, 0, 0, .35)); }
.gap { width: 68px; flex: none; }
.sep { width: 2px; height: 120px; margin: 20px 28px 0 30px; flex: none; background: #2c2926; }

.on::after {
  content: "";
  position: absolute;
  left: 64px;
  top: 148px;
  width: 8px;
  height: 8px;
  border-radius: 50%;
  background: #050302;
}

.badge {
  position: absolute;
  left: 87px;
  top: 13px;
  width: 48px;
  height: 48px;
  border-radius: 50%;
  background: #f50a2c;
  color: #fff;
  font-size: 25px;
  font-weight: 500;
  line-height: 48px;
  text-align: center;
}

.xc { font-size: 9px; fill: #b9dcff; }
.prompt { font: 700 25px "DejaVu Sans Mono", monospace; fill: #0ce336; }
.prompt-sm { font: 700 9px "DejaVu Sans Mono", monospace; fill: #0ce336; }
.abp-lg { font: 700 32px "Open Sans", sans-serif; fill: #fff; text-anchor: middle; }
.pdf { font: 16px "Open Sans", sans-serif; fill: #666; }
```
